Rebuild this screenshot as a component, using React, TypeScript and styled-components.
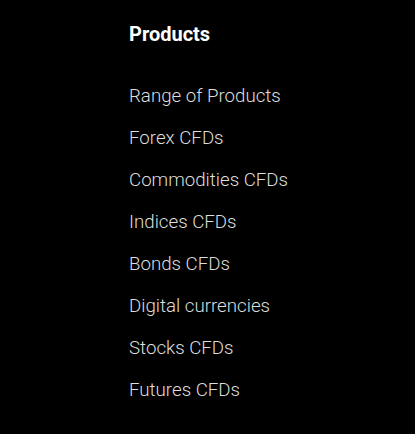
import React from 'react';
import styled, {createGlobalStyle} from 'styled-components';

const GlobalStyle = createGlobalStyle`
  html, body {
    margin: 0;
    padding: 0;
    background: #000000;
  }
  body {
    font-family: Roboto, "Noto Sans", sans-serif;
  }
`;

const Footer = styled.div`
  width: 415px;
  height: 434px;
  background: #000000;
  box-sizing: border-box;
  padding: 22px 0 0 129px;
`;

const Title = styled.h3`
  margin: 0;
  font-size: 20px;
  line-height: 24px;
  font-weight: 700;
  color: #ffffff;
`;

const LinkList = styled.ul`
  list-style: none;
  margin: 38px 0 0 0;
  padding: 0;
  display: flex;
  flex-direction: column;
  gap: 18px;
`;

const LinkItem = styled.li`
  font-size: 18.7px;
  line-height: 24px;
  font-weight: 300;
  color: #dedede;
`;

const products = [
  'Range of Products',
  'Forex CFDs',
  'Commodities CFDs',
  'Indices CFDs',
  'Bonds CFDs',
  'Digital currencies',
  'Stocks CFDs',
  'Futures CFDs'
];

const App = () => (
  <>
    <GlobalStyle />
    <Footer>
      <Title>Products</Title>
      <LinkList>
        {products.map(p => (
          <LinkItem key={p}>{p}</LinkItem>
        ))}
      </LinkList>
    </Footer>
  </>
);

export default App;
